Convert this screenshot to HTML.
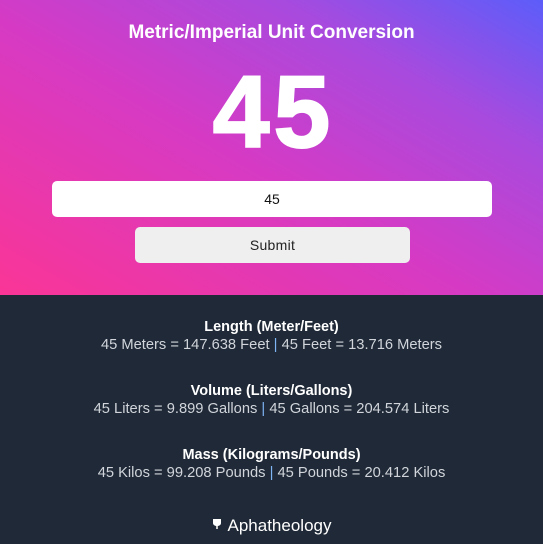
<!DOCTYPE html>
<html><head><style>
*{margin:0;padding:0;box-sizing:border-box}
body{width:543px;height:544px;overflow:hidden;font-family:"Liberation Sans",sans-serif;background:#1f2937}
.top{height:295px;background:linear-gradient(30deg,#fa3596 0%,#d63ac4 45%,#a84ade 75%,#5c5dfa 100%);position:relative;text-align:center;color:#fff}
h1{position:absolute;top:22px;width:100%;font-size:19px;font-weight:bold;letter-spacing:0px}
.big{position:absolute;top:57px;width:100%;font-size:102px;font-weight:bold;line-height:110px;letter-spacing:4px;text-indent:4px;-webkit-text-stroke:2px #fff}
.inp{position:absolute;left:52px;top:181px;width:440px;height:36px;background:#fff;border-radius:5px;color:#111;font-size:14px;line-height:36px}
.btn{position:absolute;left:135px;top:227px;width:275px;height:36px;background:#efefef;border-radius:5px;color:#222;font-size:14px;line-height:36px;letter-spacing:0.3px}
.s{position:absolute;width:100%;text-align:center;color:#d1d5db;font-size:14.7px}
.s b{display:block;color:#fff;font-size:14.5px;line-height:17px}
.s span{line-height:18px}
.p{color:#7fb4f5}
.f{position:absolute;top:516px;width:100%;text-align:center;color:#fff;font-size:17px}
</style></head><body>
<div class="top">
<h1>Metric/Imperial Unit Conversion</h1>
<div class="big">45</div>
<div class="inp">45</div>
<div class="btn">Submit</div>
</div>
<div class="s" style="top:319px"><b>Length (Meter/Feet)</b><span>45 Meters = 147.638 Feet <span class="p">|</span> 45 Feet = 13.716 Meters</span></div>
<div class="s" style="top:383px"><b>Volume (Liters/Gallons)</b><span>45 Liters = 9.899 Gallons <span class="p">|</span> 45 Gallons = 204.574 Liters</span></div>
<div class="s" style="top:447px"><b>Mass (Kilograms/Pounds)</b><span>45 Kilos = 99.208 Pounds <span class="p">|</span> 45 Pounds = 20.412 Kilos</span></div>
<div class="f"><svg width="10" height="12" viewBox="0 0 10 12" style="margin-right:6px;vertical-align:1px"><path d="M1 1h8v4c0 2-2 3-4 3s-4-1-4-3z" fill="#fff"/><rect x="4" y="8" width="2" height="3" fill="#ccc"/></svg>Aphatheology</div>
</body></html>
